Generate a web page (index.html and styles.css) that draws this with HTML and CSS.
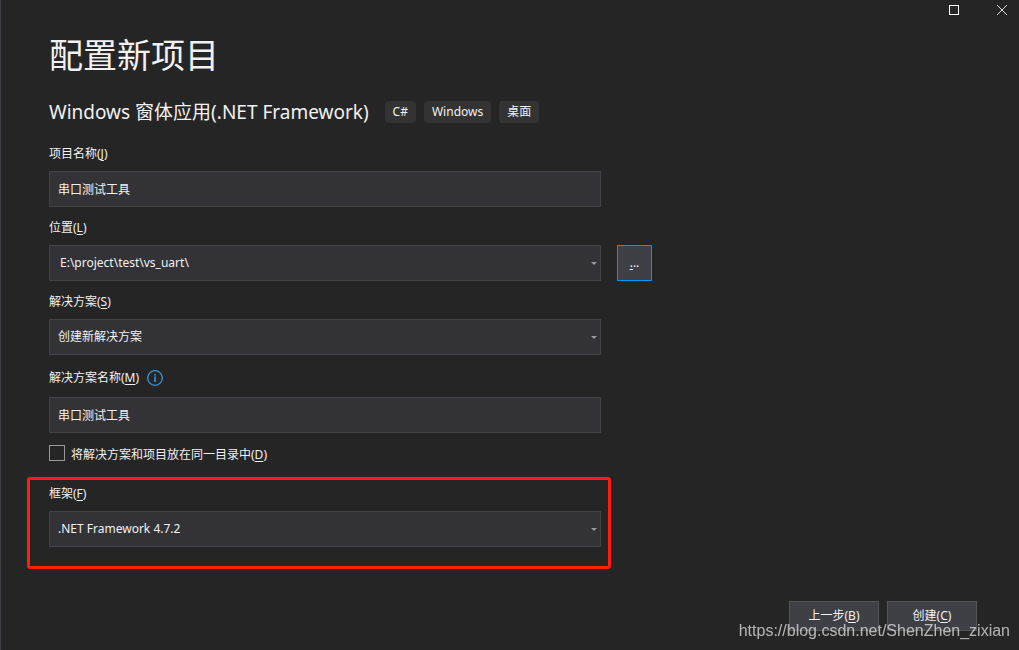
FILE: index.html
```html
<!DOCTYPE html>
<html lang="zh-CN">
<head>
<meta charset="utf-8">
<meta name="viewport" content="width=device-width, initial-scale=1">
<title>配置新项目</title>
<link rel="stylesheet" href="styles.css">
</head>
<body class="window">
  <div class="titlebar">
    <button class="caption-button" type="button" aria-label="最大化">
      <svg width="10" height="10" viewBox="0 0 10 10" fill="none" stroke="#fff" shape-rendering="crispEdges"><rect x="0.5" y="0.5" width="9" height="9"/></svg>
    </button>
    <button class="caption-button" type="button" aria-label="关闭">
      <svg width="10" height="10" viewBox="0 0 10 10" fill="none" stroke="#e0e0e0"><path d="M0 0L10 10M10 0L0 10"/></svg>
    </button>
  </div>

  <main class="content">
    <h1 class="title">配置新项目</h1>
    <div class="template">
      <h2 class="template-name">Windows 窗体应用(.NET Framework)</h2>
      <ul class="tags">
        <li class="tag">C#</li>
        <li class="tag">Windows</li>
        <li class="tag">桌面</li>
      </ul>
    </div>

    <form class="form" id="project-form">
      <div class="field">
        <label class="label" for="project-name">项目名称(<u>J</u>)</label>
        <input class="control" id="project-name" type="text" value="串口测试工具">
      </div>

      <div class="field">
        <label class="label" for="location">位置(<u>L</u>)</label>
        <div class="control-row">
          <div class="combo">
            <select class="control control-path" id="location"><option>E:\project\test\vs_uart\</option></select>
            <svg class="arrow" width="6" height="3" viewBox="0 0 6 3" fill="#999"><path d="M0 0H6L3 3Z"/></svg>
          </div>
          <button class="browse" type="button" aria-label="浏览"><u>.</u>..</button>
        </div>
      </div>

      <div class="field">
        <label class="label" for="solution">解决方案(<u>S</u>)</label>
        <div class="combo">
          <select class="control" id="solution"><option>创建新解决方案</option></select>
          <svg class="arrow" width="6" height="3" viewBox="0 0 6 3" fill="#999"><path d="M0 0H6L3 3Z"/></svg>
        </div>
      </div>

      <div class="field">
        <div class="label-row">
          <label class="label" for="solution-name">解决方案名称(<u>M</u>)</label>
          <svg class="info" width="16" height="16" viewBox="0 0 16 16" fill="none" stroke="#3a96dd"><circle cx="8" cy="8" r="7.3" stroke-width="1.3"/><path d="M8 6.5V12M8 4V5.5" stroke-width="1.6"/></svg>
        </div>
        <input class="control" id="solution-name" type="text" value="串口测试工具">
      </div>

      <div class="check-row">
        <input class="checkbox" id="same-folder" type="checkbox">
        <label class="check-label" for="same-folder">将解决方案和项目放在同一目录中(<u>D</u>)</label>
      </div>

      <div class="highlight">
        <label class="label" for="framework">框架(<u>F</u>)</label>
        <div class="combo">
          <select class="control" id="framework"><option>.NET Framework 4.7.2</option></select>
          <svg class="arrow" width="6" height="3" viewBox="0 0 6 3" fill="#999"><path d="M0 0H6L3 3Z"/></svg>
        </div>
      </div>
    </form>
  </main>

  <footer class="footer">
    <button class="button" type="button">上一步(<u>B</u>)</button>
    <button class="button" type="submit" form="project-form">创建(<u>C</u>)</button>
  </footer>
  <div class="watermark">https://blog.csdn.net/ShenZhen_zixian</div>
</body>
</html>
```
FILE: styles.css
```css
* {
  box-sizing: border-box;
}

.window {
  display: flex;
  flex-direction: column;
  min-height: 100vh;
  margin: 0;
  border-left: 1px solid #3f3f46;
  background: #252526;
  color: #f1f1f1;
  font: 12px/18px "Noto Sans", "Noto Sans CJK SC", sans-serif;
}

button,
input,
select {
  margin: 0;
  color: inherit;
  font: inherit;
}

u {
  text-underline-offset: 2px;
}

.titlebar {
  display: flex;
  justify-content: flex-end;
  gap: 18px;
  padding-right: 2px;
}

.caption-button {
  display: grid;
  place-items: center;
  width: 30px;
  height: 20px;
  padding: 0;
  border: 0;
  background: none;
}

.content {
  padding: 11px 48px 0;
}

.title {
  margin: 0;
  font-size: 34px;
  font-weight: 400;
  line-height: 48px;
}

.template {
  display: flex;
  flex-wrap: wrap;
  align-items: center;
  gap: 16px;
  margin-top: 19px;
}

.template-name {
  margin: 0;
  font-size: 19px;
  font-weight: 400;
  line-height: 28px;
}

.tags {
  display: flex;
  gap: 8px;
  margin: 0;
  padding: 0;
  list-style: none;
}

.tag {
  padding: 2px 8px;
  border-radius: 4px;
  background: #333334;
}

.form {
  display: flex;
  flex-direction: column;
  gap: 12px;
  max-width: 552px;
  margin-top: 19px;
}

.field {
  display: flex;
  flex-direction: column;
  gap: 8px;
}

.label-row {
  display: flex;
  align-items: center;
  gap: 8px;
  height: 22px;
}

.control {
  width: 100%;
  height: 36px;
  padding: 0 8px;
  border: 1px solid #434346;
  border-radius: 0;
  outline: 0;
  background: #333337;
  appearance: none;
}

.control-path {
  padding-left: 10px;
}

.control-row {
  display: flex;
  gap: 16px;
  margin-right: -51px;
}

.combo {
  display: grid;
  flex: 1;
  align-items: center;
}

.combo > * {
  grid-area: 1 / 1;
}

.arrow {
  justify-self: end;
  margin-right: 4px;
  pointer-events: none;
}

.browse {
  width: 35px;
  height: 36px;
  padding: 0;
  border: 1px solid #0097fb;
  background: #3f3f46;
}

.check-row {
  display: flex;
  align-items: flex-start;
  gap: 6px;
}

.checkbox {
  width: 16px;
  height: 16px;
  border: 1px solid #999;
  background: #252526;
  appearance: none;
}

.checkbox:checked {
  background: #0097fb;
}

.check-label {
  padding-top: 1px;
}

.highlight {
  display: flex;
  flex-direction: column;
  gap: 8px;
  margin: 1px -10px 0 -22px;
  padding: 5px 7px 19px 19px;
  border: 3px solid #ff1d0f;
  border-radius: 3px;
}

.footer {
  display: flex;
  justify-content: flex-end;
  gap: 8px;
  margin-top: auto;
  padding: 16px 42px 19px;
}

.button {
  width: 90px;
  height: 30px;
  padding: 0;
  border: 1px solid #555558;
  background: #3f3f46;
}

.watermark {
  position: fixed;
  right: 9px;
  bottom: 9px;
  color: rgba(255, 255, 255, 0.65);
  font: 16px/20px "Liberation Sans", Arial, sans-serif;
  pointer-events: none;
}
```
